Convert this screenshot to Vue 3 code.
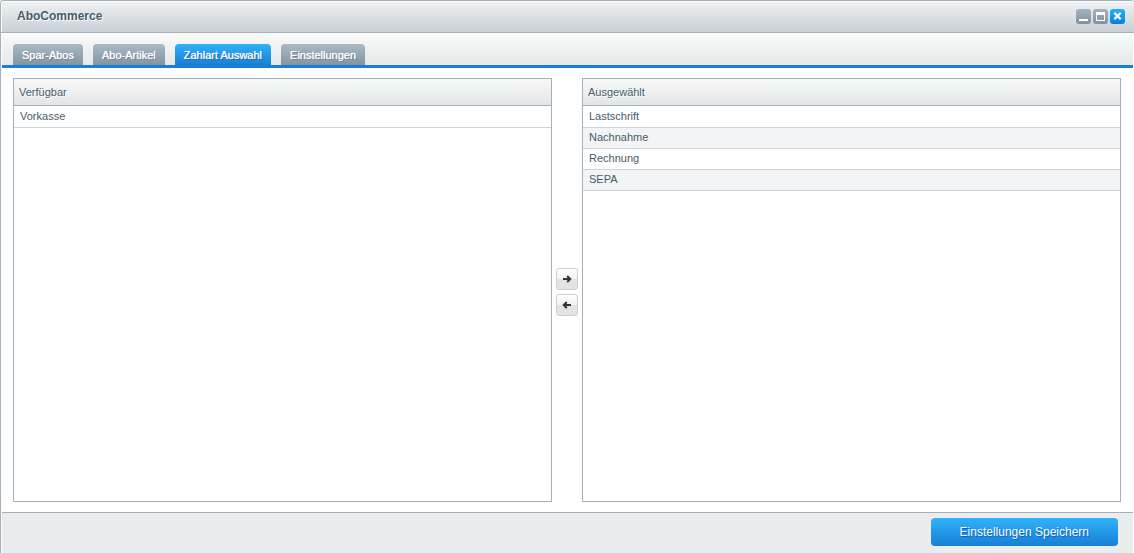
<script setup>
import { ref } from 'vue'

const tabs = ['Spar-Abos', 'Abo-Artikel', 'Zahlart Auswahl', 'Einstellungen']
const active = ref('Zahlart Auswahl')
const available = ref(['Vorkasse'])
const selected = ref(['Lastschrift', 'Nachnahme', 'Rechnung', 'SEPA'])
</script>

<template>
  <div class="window">
    <header class="titlebar">
      <h1>AboCommerce</h1>
      <div class="tools">
        <button type="button" class="tool" aria-label="Minimieren">
          <svg width="15" height="15" viewBox="0 0 15 15"><path d="M3 10h9v2H3z" fill="#fff" /></svg>
        </button>
        <button type="button" class="tool" aria-label="Maximieren">
          <svg width="15" height="15" viewBox="0 0 15 15"><path d="M3 3h9v9H3zM4 6v5h7V6z" fill="#fff" fill-rule="evenodd" /></svg>
        </button>
        <button type="button" class="tool close" aria-label="Schließen">
          <svg width="15" height="15" viewBox="0 0 15 15"><path d="M4.300 3.800l6.400 6.400M10.700 3.800l-6.400 6.400" fill="none" stroke="#fff" stroke-width="2.200" /></svg>
        </button>
      </div>
    </header>

    <nav class="tabs">
      <button
        v-for="tab in tabs"
        :key="tab"
        type="button"
        class="tab"
        :class="{ active: tab === active }"
        @click="active = tab"
      >{{ tab }}</button>
    </nav>

    <main class="content">
      <section class="panel">
        <h2>Verfügbar</h2>
        <ul>
          <li v-for="item in available" :key="item">{{ item }}</li>
        </ul>
      </section>
      <div class="movers">
        <button type="button" class="mover" aria-label="Hinzufügen">
          <svg width="10" height="8" viewBox="0 0 10 8"><path d="M1 4h7M5.200 1l3 3-3 3" fill="none" stroke="#333" stroke-width="2" /></svg>
        </button>
        <button type="button" class="mover" aria-label="Entfernen">
          <svg width="10" height="8" viewBox="0 0 10 8"><path d="M9 4H2M4.800 1l-3 3 3 3" fill="none" stroke="#333" stroke-width="2" /></svg>
        </button>
      </div>
      <section class="panel">
        <h2>Ausgewählt</h2>
        <ul>
          <li v-for="item in selected" :key="item">{{ item }}</li>
        </ul>
      </section>
    </main>

    <footer class="footer">
      <button type="button" class="save">Einstellungen Speichern</button>
    </footer>
  </div>
</template>

<style>
body {
  background: #e9edf0;
}
</style>

<style scoped>
.window {
  box-sizing: border-box;
  display: flex;
  flex-direction: column;
  min-height: 100vh;
  border: solid #a2b1bb;
  border-width: 1px 0 0 1px;
  border-radius: 4px 4px 0 0;
  background: #fff;
  color: #475c6a;
  font-family: "Liberation Sans", Arial, sans-serif;
  font-size: 11px;
  overflow: hidden;
}
button {
  border: 0;
  margin: 0;
  padding: 0;
  font: inherit;
  cursor: pointer;
}
svg {
  display: block;
}
.titlebar {
  box-sizing: border-box;
  display: flex;
  align-items: center;
  justify-content: space-between;
  height: 32px;
  padding: 0 9px 2px 16px;
  border-bottom: 1px solid #a2b1bb;
  background: linear-gradient(#f0f2f3, #c9d0d6);
  box-shadow: inset 1px 1px 0 #fafbfb;
}
h1 {
  margin: 0;
  font-size: 12px;
  line-height: 16px;
  text-shadow: 1px 1px 0 #fff;
}
.tools {
  display: flex;
  gap: 2px;
  padding-top: 2px;
}
.tool {
  width: 15px;
  height: 15px;
  border-radius: 3px;
  background: linear-gradient(#a3b3be, #80929f);
}
.tool.close {
  background: linear-gradient(#22b0fb, #087fda);
}
.tabs {
  display: flex;
  align-items: flex-end;
  gap: 10px;
  height: 32px;
  margin-left: 1px;
  margin-right: 1px;
  padding: 0 11px;
  border-bottom: 3px solid #187fd5;
  background: linear-gradient(#fafafa, #e6e8e9);
}
.tab {
  height: 21px;
  padding: 1px 9px 0;
  border-radius: 4px 4px 0 0;
  background: linear-gradient(#abbac4, #8295a1);
  color: #fff;
  line-height: 20px;
  text-shadow: 0 0 1px #fff, 1px 1px 0 #667987;
  white-space: nowrap;
}
.tab.active {
  background: linear-gradient(#2fb2fa, #187fd5);
  text-shadow: 0 0 1px #fff, 1px 1px 0 #0757ba;
}
.content {
  flex: 1;
  display: flex;
  padding: 10px 13px 10px 12px;
}
.panel {
  flex: 1 1 0;
  min-width: 0;
  border: 1px solid #a2b1bb;
  background: #fff;
}
h2 {
  margin: 0;
  padding: 0 5px;
  border-bottom: 1px solid #a2b1bb;
  background: linear-gradient(#f9f9f9, #e2e5e7);
  font-size: 11px;
  font-weight: normal;
  line-height: 26px;
  text-shadow: 1px 1px 0 #fff;
}
ul {
  margin: 0;
  padding: 0;
  list-style: none;
}
li {
  padding: 0 6px;
  border-bottom: 1px solid #cad5db;
  line-height: 20px;
}
li:first-child {
  padding-bottom: 1px;
}
li:nth-child(n + 2) {
  padding-bottom: 2px;
  line-height: 18px;
}
li:nth-child(even) {
  background: #f2f4f6;
}
.movers {
  display: flex;
  flex-direction: column;
  justify-content: center;
  gap: 4px;
  padding: 4px 4px 0;
}
.mover {
  display: flex;
  align-items: center;
  justify-content: center;
  box-sizing: border-box;
  width: 22px;
  height: 22px;
  border: 1px solid #cfcfcf;
  border-radius: 3px;
  background: linear-gradient(#fefefe, #f2f2f2 48%, #e2e2e2 52%, #e4e4e4);
}
.footer {
  display: flex;
  justify-content: flex-end;
  margin: 0 1px;
  padding: 5px 15px 7px;
  border-top: 1px solid #a2b1bb;
  background: #eaecee;
}
.save {
  height: 28px;
  padding: 0 29px;
  border-radius: 4px;
  background: linear-gradient(#2fb3fa, #187fd5);
  color: #fff;
  font-size: 12px;
  line-height: 28px;
  text-shadow: 1px 1px 1px #0757ba;
}
</style>
